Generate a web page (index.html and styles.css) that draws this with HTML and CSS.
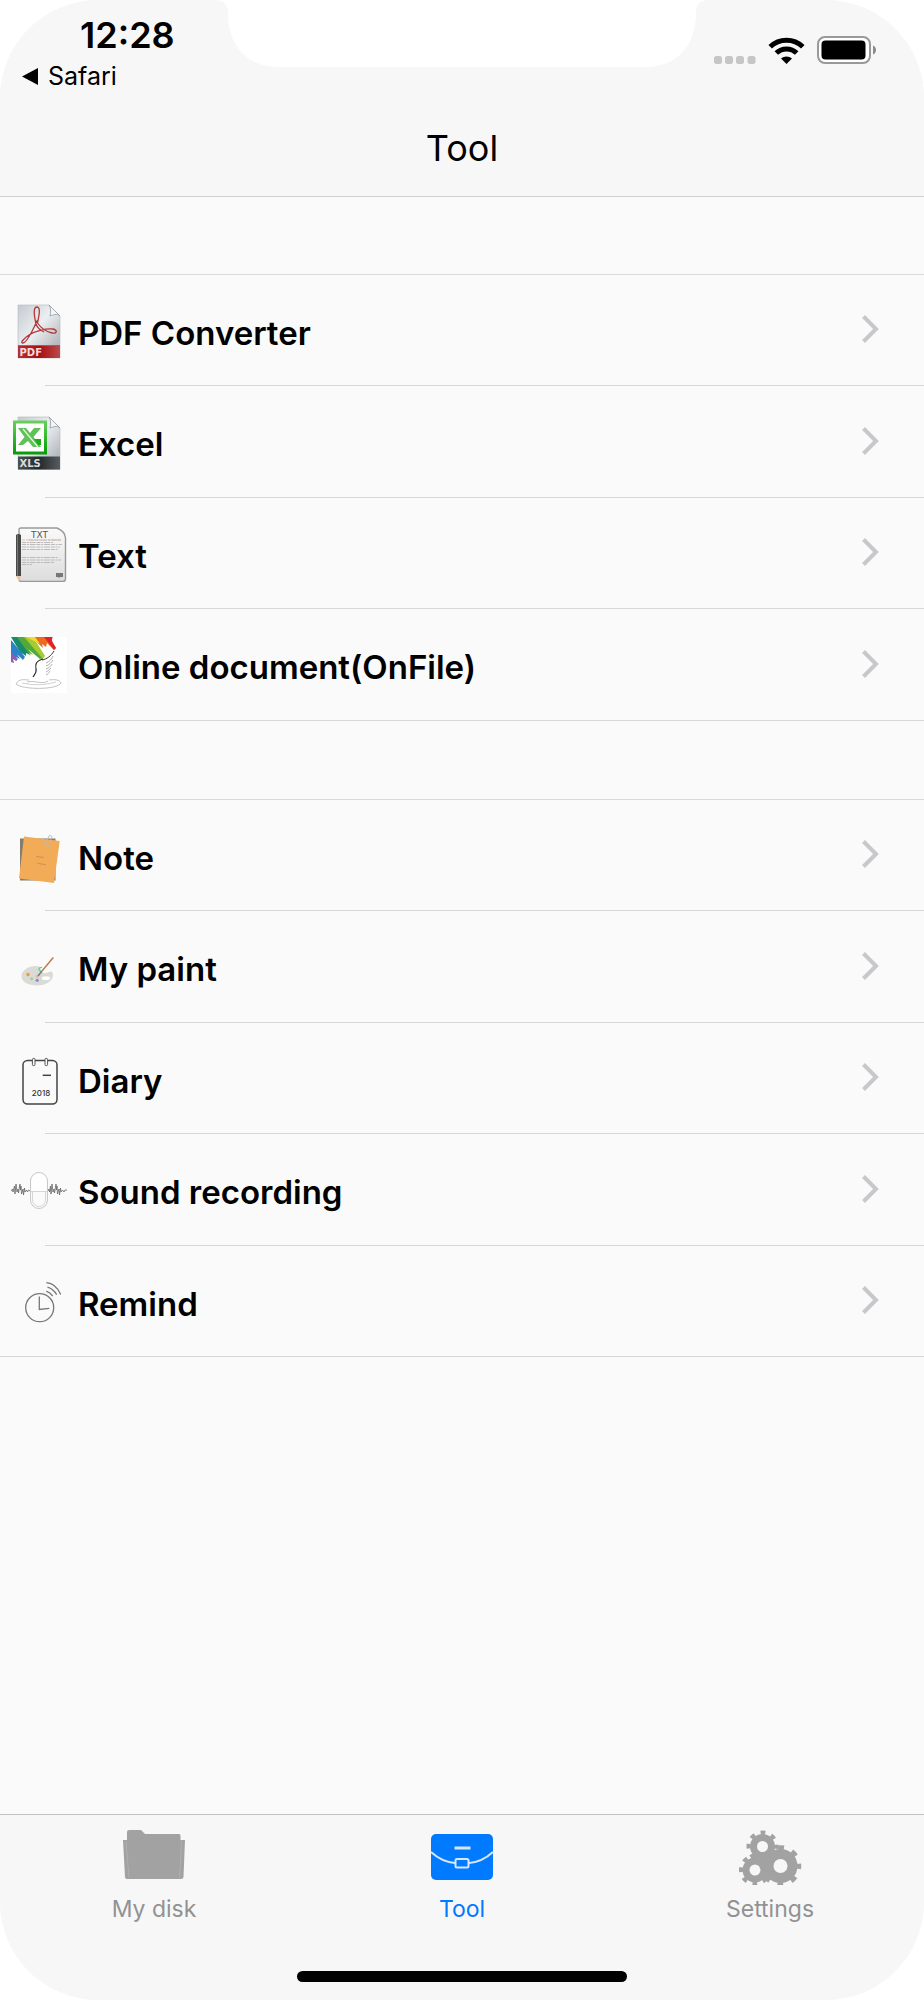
FILE: index.html
```html
<!DOCTYPE html>
<html lang="en">
<head>
<meta charset="utf-8">
<meta name="viewport" content="width=device-width, initial-scale=1">
<title>Tool</title>
<link rel="stylesheet" href="styles.css">
</head>
<body>
<svg width="0" height="0" class="defs" aria-hidden="true">
  <defs>
    <linearGradient id="page" x1="0" y1="0" x2="1" y2="1"><stop offset="0" stop-color="#c3cad0"/><stop offset=".45" stop-color="#eceff1"/><stop offset="1" stop-color="#9da3a9"/></linearGradient>
    <linearGradient id="red" x1="0" y1="0" x2="1" y2="0"><stop offset="0" stop-color="#b33232"/><stop offset=".5" stop-color="#a80f12"/><stop offset="1" stop-color="#bb4a4a"/></linearGradient>
    <linearGradient id="dark" x1="0" y1="0" x2="1" y2="0"><stop offset="0" stop-color="#4b5155"/><stop offset=".5" stop-color="#25292c"/><stop offset="1" stop-color="#565c60"/></linearGradient>
    <linearGradient id="green" x1="0" y1="0" x2="0" y2="1"><stop offset="0" stop-color="#6bd05e"/><stop offset=".6" stop-color="#27b322"/><stop offset="1" stop-color="#089a0c"/></linearGradient>
    <linearGradient id="sheet" x1="0" y1="0" x2="0" y2="1"><stop offset="0" stop-color="#fafafa"/><stop offset="1" stop-color="#dcdcdc"/></linearGradient>
    <symbol id="chevron" viewBox="0 0 17 28"><path d="M1.5 1.5 14 14 1.5 26.500" fill="none" stroke="#c7c7cc" stroke-width="4"/></symbol>
  </defs>
</svg>
<div class="screen">
  <header class="header">
    <div class="status">
      <div class="status-left">
        <span class="time">12:28</span>
        <a class="back" href="#"><svg width="17" height="17" viewBox="0 0 17 17" aria-hidden="true"><path d="M0 8.500 16 0V17Z"/></svg>Safari</a>
      </div>
      <svg class="notch" width="492" height="67" viewBox="0 0 492 67" aria-hidden="true"><path d="M0 0C9 1 12 5 12 14C12 46 32 67 62 67H430C460 67 480 46 480 14C480 5 483 1 492 0Z" fill="#fff"/></svg>
      <div class="status-right">
        <svg width="42" height="8" viewBox="0 0 42 8" aria-hidden="true"><g fill="#c6c6c6"><rect width="8" height="8" rx="2.500"/><rect x="11" width="8" height="8" rx="2.500"/><rect x="22" width="8" height="8" rx="2.500"/><rect x="33.500" width="8" height="8" rx="2.500"/></g></svg>
        <svg width="37" height="27" viewBox="0 0 37 27" aria-hidden="true"><g fill="none" stroke="#000" stroke-width="5"><path d="M2.200 9.700A23.500 23.500 0 0 1 34.800 9.700"/><path d="M8.300 16A14.700 14.700 0 0 1 28.700 16"/></g><path d="M13 21.500A8.500 8.500 0 0 1 24 21.500L18.500 27Z"/></svg>
        <svg width="60" height="28" viewBox="0 0 60 28" aria-hidden="true"><rect x="1" y="1" width="52" height="26" rx="7" fill="#fff" stroke="#999" stroke-width="2"/><rect x="4.500" y="4.500" width="44" height="19" rx="4" fill="#000"/><path d="M56 9.500C60 11 60 17 56 18.500Z" fill="#8c8c8c"/></svg>
      </div>
    </div>
    <h1 class="title">Tool</h1>
  </header>

  <main class="content">
    <ul class="group">
      <li class="row"><a class="link" href="#">
        <svg class="icon" viewBox="0 0 56 56" aria-hidden="true"><path d="M7 2H38L49 13V55H7Z" fill="url(#page)" stroke="#b9bfc4" stroke-width=".7"/><path d="M38 2 49 13C46 10 42 12 39 13C40 9 40 5 38 2Z" fill="#f4f6f7" stroke="#939ba2" stroke-width=".8"/><rect x="7" y="42.500" width="42" height="12.500" fill="url(#red)"/><path d="M7 42.500H49" stroke="#8c4b4b" stroke-width=".6"/><path d="M25 21C23 12 22 4 26 4C30 4 28 13 26.500 20C30 25 36 29 41 30C46 31 47 27 42 26C36 25 24 28 18 32C12 36 9 40 12 40C15 40 21 29 26.500 17M25 21C26 24 29 27 33 29" fill="none" stroke="#b0383b" stroke-width="1.300"/><text x="8.500" y="52.500" class="tag" fill="#f6d9d9">PDF</text></svg>
        <span class="name">PDF Converter</span><svg class="chevron" aria-hidden="true"><use href="#chevron"/></svg></a></li>
      <li class="row"><a class="link" href="#">
        <svg class="icon" viewBox="0 0 56 56" aria-hidden="true"><path d="M7 3H38L49 14V55.500H7Z" fill="url(#page)" stroke="#b9bfc4" stroke-width=".7"/><path d="M38 3 49 14C46 11 42 13 39 14C40 10 40 6 38 3Z" fill="#f4f6f7" stroke="#939ba2" stroke-width=".8"/><rect x="7" y="42.500" width="42" height="13" fill="url(#dark)"/><rect x="2" y="6.500" width="34" height="34" fill="url(#green)"/><rect x="5" y="9.500" width="28" height="28" fill="#fff"/><path d="M7 14H15L19 19 23 14H30L22.500 23 30 33H22L17 27 12 31H7L13.500 23Z" fill="#5fc158"/><path d="M12 15 27 33" stroke="#e5f8e2" stroke-width="1.200"/><path d="M23 25H30V31H27Z" fill="#1faa20"/><text x="8.500" y="53" class="tag" fill="#d9dcde">XLS</text></svg>
        <span class="name">Excel</span><svg class="chevron" aria-hidden="true"><use href="#chevron"/></svg></a></li>
      <li class="row"><a class="link" href="#">
        <svg class="icon" viewBox="0 0 56 56" aria-hidden="true"><path d="M10 2H46C51 4 54 7 54.500 12V53Q54.500 55.500 52 55.500H10Q8 55.500 8 53V4Q8 2 10 2Z" fill="url(#sheet)" stroke="#999" stroke-width="1.400"/><text x="20" y="11.500" class="txt">TXT</text><path d="M11 14H50" stroke="#ecc0aa" stroke-width="1" stroke-dasharray="3 1 12 3 5 2"/><g stroke="#bbb" stroke-width="1.200" stroke-dasharray="4 .8 2 .8 6 .8"><path d="M18 14H50M11 16.500H42M11 18.500H51M11 21H49M11 23.500H47"/><path d="M11 31.500H47M11 34H50M11 36.500H43M11 38.500H21"/></g><path d="M45 47h7v4h-3l-1 1-1-1h-2z" fill="#777"/><path d="M5 9Q7.500 7 10 9V50H5Z" fill="#484848"/><path d="M6.500 9V50" stroke="#777"/><path d="M5 50H10L8.500 55H7.500Z" fill="#e6c7aa"/></svg>
        <span class="name">Text</span><svg class="chevron" aria-hidden="true"><use href="#chevron"/></svg></a></li>
      <li class="row"><a class="link" href="#">
        <svg class="icon" viewBox="0 0 56 56" aria-hidden="true"><rect width="56" height="56" fill="#fff"/><path d="M20 0H42L40 4 45 11 43 13 36 6 35 10 31 7 32 11Z" fill="#ef6a21"/><path d="M33 0H41L41 4 45 11 43 13Z" fill="#e3212b"/><path d="M11 0H22L34 19 31 23Z" fill="#a5cb32"/><path d="M15 0H24L29 7Z" fill="#f1dc28"/><path d="M5 0H13L31 21 29 22 17 12 22 18 18 16 20 19 14 15Z" fill="#54a83a"/><path d="M0 0H6L18 17 15 16 15 19 9 15Z" fill="#178b70"/><path d="M0 3 14 20 12 23 6 17 9 22 5 20 6 24 0 18Z" fill="#2b82c4"/><path d="M0 15 7 22 5 24 2 22 3 26 0 25Z" fill="#8960b7"/><g fill="none" stroke="#333" stroke-width="1"><path d="M32 22C25 24 24 27 25 32C26 36 23 38 22 40" stroke-width="1.200"/><path d="M31 23C36 22 40 19 43 14"/><path d="M35 26C38 25 41 22 42 19M35 29C38 28 41 25 42 23M35 32C38 31 40 29 41 27M35 35C37 34 39 32 40 31M35 38C37 37 38 36 39 34" stroke="#999" stroke-width=".8"/></g><g fill="none" stroke="#bbb" stroke-width=".9"><path d="M16 45C24 43 31 48 37 44"/><path d="M5 47C8 41 14 43 18 43M38 43C44 42 49 43 50 46C46 53 12 53 5 47"/><path d="M11 46Q28 50 45 45" stroke="#ccc"/></g></svg>
        <span class="name">Online document(OnFile)</span><svg class="chevron" aria-hidden="true"><use href="#chevron"/></svg></a></li>
    </ul>

    <ul class="group">
      <li class="row"><a class="link" href="#">
        <svg class="icon" viewBox="0 0 56 56" aria-hidden="true"><path d="M9 10.500H44.500V52.500H9Z" fill="#857b70"/><path d="M13 8.500 48.700 13 43 55 8 50.500Z" fill="#f2ab57"/><path d="M25 28.500 33 29.500M26.500 35.300 35 36.700" stroke="#c99254"/><path d="M34 17 38 8C40 6 42 9 40 11L37 19C35 20 33 18 34 16L37 11" fill="none" stroke="#c5b7aa" stroke-width=".9"/></svg>
        <span class="name">Note</span><svg class="chevron" aria-hidden="true"><use href="#chevron"/></svg></a></li>
      <li class="row"><a class="link" href="#">
        <svg class="icon" viewBox="0 0 56 56" aria-hidden="true"><path d="M26 27C16 27 10.500 32 10.500 37C10.500 43 17 46.500 26 46.500C35 46.500 42 42 42 36C42 32 40 32 38 33C35 34 33 35 31 33C29 30 30 27 26 27Z" fill="#dcdad5"/><ellipse cx="35" cy="39.200" rx="4.200" ry="1.900" fill="#fff"/><circle cx="17" cy="35.500" r="1.700" fill="#ee9b3e"/><circle cx="20.700" cy="39.800" r="1.500" fill="#8edb91"/><circle cx="26.200" cy="41.300" r="1.600" fill="#8588e5"/><circle cx="26" cy="37.500" r="1.500" fill="#efb0b0"/><path d="M31 28.500Q28 28 28 30.500Q28 32 30 32" fill="none" stroke="#42dca0" stroke-width="1.300"/><path d="M42.300 18.500 31 32" stroke="#bc7d50" stroke-width="1.500"/><path d="M31 32 27 37" stroke="#777" stroke-width="1.500"/></svg>
        <span class="name">My paint</span><svg class="chevron" aria-hidden="true"><use href="#chevron"/></svg></a></li>
      <li class="row"><a class="link" href="#">
        <svg class="icon" viewBox="0 0 56 56" aria-hidden="true"><g fill="none" stroke="#444"><rect x="12" y="9.500" width="34" height="43.500" rx="4.500" stroke-width="1.500"/><g fill="#fafafa" stroke-width=".9"><rect x="21.400" y="7.300" width="2.600" height="7.400" rx="1.300"/><rect x="34" y="7.300" width="2.600" height="7.400" rx="1.300"/></g><path d="M31.700 24.300H40" stroke-width="1.500"/></g><text x="20.800" y="45" class="year">2018</text></svg>
        <span class="name">Diary</span><svg class="chevron" aria-hidden="true"><use href="#chevron"/></svg></a></li>
      <li class="row"><a class="link" href="#">
        <svg class="icon" viewBox="0 0 56 56" aria-hidden="true"><g fill="none" stroke="#666" stroke-width=".8"><path d="M0 29 1.500 27 2 30 3.500 24 4 32 5 22 6 30 7 27 7.500 31 9 22 9.500 28 10 24 10.500 32 12 27 12.500 33 13.500 26 14 30 15.500 28 16.500 30 17.500 28 19 29"/><path d="M37 29 38 27 38.500 30 39.500 24 40 32 41 22 42 30 43 27 43.500 31 45 22 45.500 28 46 24 46.500 32 48 27 48.500 33 49.500 26 50 30 51.500 28 53 30 54 28 56 28"/></g><rect x="19.500" y="10.500" width="17" height="36" rx="8.500" fill="#fafafa" stroke="#c8c8c8"/><path d="M20.500 29V19A7.500 7.500 0 0 1 35.500 19V29Z" fill="#fff"/><path d="M19.500 29.500H36.500M21.500 30V38A6.500 6.500 0 0 0 34.500 38V30" fill="none" stroke="#ccc" stroke-width=".8"/></svg>
        <span class="name">Sound recording</span><svg class="chevron" aria-hidden="true"><use href="#chevron"/></svg></a></li>
      <li class="row"><a class="link" href="#">
        <svg class="icon" viewBox="0 0 56 56" aria-hidden="true"><g fill="none" stroke="#777" stroke-width="1.300"><circle cx="28.700" cy="33.700" r="14"/><path d="M28.300 22.500V35.500L38.300 34.300M35.300 8.700Q45 9.500 49.700 20.500M36.500 13.200Q42.500 15 45.700 20.800M35.300 17.200Q39 18.500 41.700 22"/></g></svg>
        <span class="name">Remind</span><svg class="chevron" aria-hidden="true"><use href="#chevron"/></svg></a></li>
    </ul>
  </main>

  <footer class="footer">
    <nav class="tabs">
      <a class="tab" href="#"><svg width="64" height="58" viewBox="0 0 64 58" aria-hidden="true"><path d="M1 13H5V5Q5 3 7 3H18Q20 3 21 5L23 7H57Q58.500 7 58.500 9V13H63L61.500 50Q61.500 52 59 52H5Q3 52 3 50Z" fill="#a2a2a2"/><path d="M4 14 7 51M59.500 14 57.500 51" stroke="#b0b0b0"/></svg>My disk</a>
      <a class="tab tab-active" href="#" aria-current="page"><svg width="64" height="58" viewBox="0 0 64 58" aria-hidden="true"><rect x="1" y="7" width="62" height="46" rx="5" fill="#007aff"/><g fill="none" stroke="#d5e7fb" stroke-width="2"><path d="M24.500 21H40.500" stroke-width="3"/><path d="M1 25Q12 35 25 36M39 36Q52 35 63 25"/><rect x="25.500" y="32" width="13" height="8.500" rx="1.500"/></g></svg>Tool</a>
      <a class="tab" href="#"><svg width="64" height="58" viewBox="0 0 64 58" aria-hidden="true"><g fill="none" stroke="#a2a2a2"><circle cx="24.500" cy="19.500" r="9" stroke-width="7"/><circle cx="17" cy="43" r="9" stroke-width="7"/><circle cx="42.500" cy="39" r="12" stroke-width="10"/><circle cx="24.500" cy="19.500" r="14" stroke-width="4" stroke-dasharray="4.800 6.200" stroke-dashoffset="2.400"/><circle cx="17" cy="43" r="14" stroke-width="4" stroke-dasharray="4.800 6.200" stroke-dashoffset="2.400"/><circle cx="42.500" cy="39" r="18.500" stroke-width="4.500" stroke-dasharray="6 8.530" stroke-dashoffset="3"/></g><path d="M24 27 32 28 28 36 30 51 24 51 24 38 20 35Z" fill="#a2a2a2"/></svg>Settings</a>
    </nav>
    <div class="home"></div>
  </footer>
</div>
</body>
</html>
```
FILE: styles.css
```css
* { box-sizing: border-box; }

body {
  margin: 0;
  background: #fff;
  color: #000;
  font-family: Inter, "Liberation Sans", sans-serif;
}

a { color: inherit; text-decoration: none; }
svg { display: block; flex: none; }
.defs { position: absolute; }

.screen {
  display: flex;
  flex-direction: column;
  min-height: 100vh;
  overflow: hidden;
  border-radius: 98px;
  background: #fafafa;
}

.header {
  background: #f7f7f7;
  border-bottom: 1px solid #cfcfcf;
}

.status {
  display: grid;
  grid-template-columns: 1fr 492px 1fr;
  align-items: start;
  min-height: 100px;
}

.status-left {
  display: flex;
  flex-direction: column;
  gap: 4px;
  padding-top: 14px;
}

.time {
  padding-left: 80px;
  font-size: 36px;
  font-weight: 600;
  line-height: 42px;
}

.back {
  display: flex;
  align-items: center;
  gap: 9px;
  padding-left: 22px;
  font-size: 25px;
  line-height: 32px;
}

.status-right {
  display: flex;
  align-items: flex-end;
  justify-content: flex-end;
  gap: 12px;
  padding: 36px 47px 0 0;
}

.title {
  margin: 0;
  font-size: 36px;
  font-weight: 400;
  line-height: 96px;
  text-align: center;
}

.content { flex: 1; }

.group {
  margin: 77px 0 0;
  padding: 0;
  border-top: 1px solid #dadada;
  list-style: none;
}

.group + .group { margin-top: 78px; }

.row {
  height: 111px;
  background: linear-gradient(#d6d6d6, #d6d6d6) 45px 100% / 100% 1px no-repeat;
}

.row:nth-child(even) { height: 112px; }
.row:last-child { background-position: 0 100%; }

.link {
  display: flex;
  align-items: center;
  gap: 11px;
  height: 100%;
  padding: 0 45px 0 11px;
}

.icon { width: 56px; height: 56px; }

.name {
  flex: 1;
  padding-top: 4px;
  font-size: 33px;
  font-weight: 600;
  line-height: 40px;
}

.chevron {
  width: 17px;
  height: 28px;
  margin-bottom: 3px;
}

.tag { font: 700 10px "DejaVu Sans", sans-serif; }
.txt { font: 400 9px "DejaVu Sans", sans-serif; fill: #555; }
.year { font: 500 8px Inter, sans-serif; fill: #333; }

.footer {
  padding-bottom: 18px;
  background: #f7f7f7;
  border-top: 1px solid #c2c2c2;
}

.tabs {
  display: grid;
  grid-template-columns: repeat(3, 1fr);
}

.tab {
  display: flex;
  flex-direction: column;
  align-items: center;
  gap: 8px;
  padding-top: 12px;
  color: #929292;
  font-size: 23px;
  font-weight: 400;
  line-height: 32px;
}

.tab-active { color: #007aff; }

.home {
  width: 330px;
  height: 11px;
  margin: 46px auto 0;
  border-radius: 6px;
  background: #000;
}
```
